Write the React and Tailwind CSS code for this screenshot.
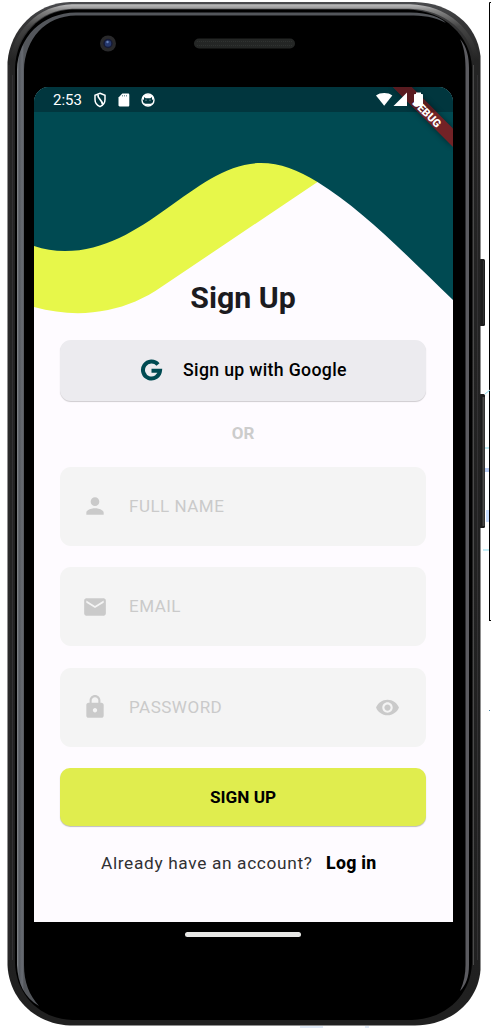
import React from "react";
import { MdPerson, MdEmail, MdLock, MdVisibility } from "react-icons/md";

function Shell() {
  return (
    <svg className="absolute inset-0" width="491" height="1028" viewBox="0 0 491 1028" fill="none">
      <defs>
        <linearGradient id="rim" x1="0" y1="2" x2="0" y2="1026" gradientUnits="userSpaceOnUse">
          <stop offset="0" stopColor="#4a4b4e" />
          <stop offset="0.02" stopColor="#363637" />
          <stop offset="0.06" stopColor="#242424" />
          <stop offset="1" stopColor="#202020" />
        </linearGradient>
        <linearGradient id="band" x1="0" y1="4" x2="0" y2="60" gradientUnits="userSpaceOnUse">
          <stop offset="0" stopColor="#c0c0c1" />
          <stop offset="0.12" stopColor="#858585" />
          <stop offset="0.4" stopColor="#454545" />
          <stop offset="1" stopColor="#242424" />
        </linearGradient>
        <linearGradient id="glareL" x1="17" y1="0" x2="24" y2="0" gradientUnits="userSpaceOnUse">
          <stop offset="0" stopColor="#85898d" />
          <stop offset="0.3" stopColor="#55595f" />
          <stop offset="0.75" stopColor="#686c73" />
          <stop offset="1" stopColor="#53565b" />
        </linearGradient>
      </defs>
      <path d="M489.5 620.500V2.500H491M489 620.500h2" stroke="#000" />
      <path d="M485 394l5-4M485 448h4M483 550h6" stroke="#8bdcee" />
      <path d="M485 469h4M485 471h4" stroke="#779ce8" />
      <path d="M486 510h3v12h-3z" fill="#c8ddff" />
      <path d="M489 710h1v1h-1z" fill="#4f8cab" />
      <path d="M300 1027h23M365 1027h4" stroke="#bfd4ee" />
      <rect x="479" y="259" width="6" height="67" rx="1.500" fill="#1b1b1b" />
      <path d="M483.500 261v63" stroke="#303030" />
      <rect x="479" y="394" width="6" height="134" rx="1.500" fill="#1b1b1b" />
      <path d="M483.500 397v129" stroke="#494847" strokeWidth="2" />
      <path d="M7.500 62C10 30 35 3 70 2H415C450 3 477 24 480.500 56V970C478 1002 451 1025 415 1025.500H70C35 1024 9 999 7.500 965Z" fill="url(#rim)" />
      <path d="M12 76V65C14 32 40 7.500 72 6.500H410C446 7.500 474 31 477 65V76" stroke="url(#band)" strokeWidth="4.500" />
      <path d="M15 68C16 36 40 10.500 72 9.500H408C444 10.500 471 36 472 68V963C471 995 446 1019 412 1020H72C40 1019 16 995 15 963Z" fill="#000" />
      <path d="M473.500 65V965" stroke="#4a4a4a" />
      <path d="M9 65V960M12.500 75V960M477.500 75V960" stroke="#323133" />
      <path d="M17 70C18 37 42 13 76 12.500H410C430 13 440 17 446 23C433 16.500 424 15.500 408 15.500H76C45 16 25 39 24 70V965C24 982 29 995 39 1006C24 997 18 984 17 965Z" fill="url(#glareL)" />
      <path d="M460 39C467 47 469 57 469 68V965C469 977 466 985 460 991C464 982 465.500 974 465.500 965V68C465.500 56 464 47 460 39Z" fill="#5b5b60" />
      <circle cx="108" cy="43.500" r="8" fill="#29292b" />
      <circle cx="108" cy="43.500" r="4.700" fill="#151a35" />
      <circle cx="108" cy="43.500" r="3.200" fill="#26386d" />
      <circle cx="107.500" cy="42" r="1.200" fill="#647eb6" />
      <rect x="194" y="38.500" width="101" height="10" rx="5" fill="#242625" />
      <path d="M197 41.500H292M197 45.500H292" stroke="#303331" strokeDasharray="1 1" />
    </svg>
  );
}

function Waves() {
  return (
    <svg className="absolute inset-0" width="419" height="240" viewBox="34 87 419 240">
      <path d="M34 220V307C60 314 84 315 108 310C127 306 144 299 162 286.500L317.500 182L300 140H34Z" fill="#e7f74a" />
      <path d="M34 87H453V300C405 254 363 210 317.500 182C298 170 280 163 261 163C196 163 146 251 65 251C54 251 44 249.500 34 246Z" fill="#004a52" />
    </svg>
  );
}

function StatusBar() {
  return (
    <div className="relative flex h-[25px] items-center bg-[#01363e] pl-[19px] text-white">
      <span className="w-[40px] pt-[2px] text-[15px] leading-[23px]">2:53</span>
      <svg className="h-[16px] w-[14px]" viewBox="0 0 14 16" fill="none" stroke="#fff" strokeWidth="1.500">
        <path d="M7 1.300 12 3.200V7.500C12 11 10 13.300 7 14.600 4 13.300 2 11 2 7.500V3.200Z" />
        <path d="M5 2.500C4 7 9.500 7.500 9.500 12.500" strokeWidth="1.700" />
      </svg>
      <svg className="ml-[11px] h-[16px] w-[12px]" viewBox="0 0 12 16">
        <path d="M4.300 1.500H10c.8 0 1.300.5 1.300 1.200v10.600c0 .8-.5 1.200-1.200 1.200H1.700c-.8 0-1.200-.5-1.200-1.200V5.500Z" fill="#fff" />
        <path d="M4.500 3v1.500M6.500 3v1.500M8.500 3v1.500" stroke="#01363e" strokeWidth=".5" />
      </svg>
      <svg className="ml-[11px] h-[14px] w-[14px]" viewBox="0 0 14 14">
        <circle cx="7" cy="7" r="6" fill="none" stroke="#fff" strokeWidth="1.400" />
        <path d="M1.500 6C1.500 0 12.500 0 12.500 6L11 7V4L9.300 5.200H4.700L3 4V7Z" fill="#fff" />
        <path d="M2.600 10 4.500 10.700H9.500L11.400 10L9.500 12.500H4.500Z" fill="#fff" />
        <path d="M4.500 7.200h1M8.500 7.200h1" stroke="#fff" strokeWidth=".7" />
      </svg>
    </div>
  );
}

function DebugRibbon() {
  return (
    <svg className="absolute top-0 right-0" width="100" height="72" viewBox="353 87 100 72">
      <defs>
        <filter id="shade" x="-30%" y="-30%" width="160%" height="160%">
          <feGaussianBlur stdDeviation="3" />
        </filter>
      </defs>
      <path d="M393 87H411L453 129V147Z" fill="#000" opacity=".45" filter="url(#shade)" />
      <path d="M393 87H411.500L453 128.500V147Z" fill="#732226" />
      <path d="M393 87H411.500L436.500 112H418Z" fill="#591b20" />
      <text x="427" y="117" textAnchor="middle" transform="rotate(45 427 113)" fill="#fff" fontFamily="Roboto, sans-serif" fontSize="11" fontWeight="900">DEBUG</text>
      <path d="M376 95.500C380 92.200 388.500 92.200 392.300 95.500L384.200 105.700Z" fill="#fff" />
      <path d="M407 92.500V106H393.500Z" fill="#fff" />
      <path d="M416 92.500h5V94h1.200q.8 0 .8.800V105q0 1-1 1h-7q-1 0-1-1V94.800q0-.8.800-.8H416Z" fill="#fff" />
    </svg>
  );
}

function Field({ Icon, label, trailing }) {
  return (
    <div className="flex h-[79px] items-center rounded-[11px] bg-[#f4f4f4] pl-[21.500px] pr-[26px] text-[#cacaca]">
      <Icon size={26} />
      <span className="ml-[21.500px] flex-1 pt-[1px] text-[17px] tracking-[0.500px]">{label}</span>
      {trailing}
    </div>
  );
}

export default function App() {
  return (
    <div className="relative h-[1028px] w-[491px] overflow-hidden bg-white pt-[87px] pl-[34px] font-['Roboto',sans-serif]">
      <Shell />
      <main className="relative h-[835px] w-[419px] overflow-hidden rounded-t-[15px] bg-[#fefbff]">
        <Waves />
        <StatusBar />
        <DebugRibbon />
        <div className="relative flex flex-col pr-[27px] pl-[26px] pt-[166px]">
          <h1 className="h-[61.500px] text-center text-[30.300px] leading-[40px] font-bold text-[#1c1b1f]">Sign Up</h1>
          <button className="flex h-[61px] w-full items-center rounded-[11px] bg-[#ecebef] pl-[80px] text-[17.700px] font-medium text-black shadow-[0_1px_1px_#00000030]">
            <svg className="mr-[20px] h-[23px] w-[23px]" viewBox="0 0 24 24">
              <path d="M18.800 5.700A8.900 8.900 0 1 0 20.900 12.200H12" fill="none" stroke="#004a52" strokeWidth="4.200" />
            </svg>
            <span className="pt-[1px] tracking-[0.330px]">Sign up with Google</span>
          </button>
          <div className="flex h-[66px] items-center justify-center pt-[1px] text-[17px] font-bold text-[#cccccc]">OR</div>
          <div className="flex flex-col gap-[21.500px]">
            <Field Icon={MdPerson} label="FULL NAME" />
            <Field Icon={MdEmail} label="EMAIL" />
            <Field Icon={MdLock} label="PASSWORD" trailing={<MdVisibility size={25} />} />
          </div>
          <button className="mt-[21.500px] h-[58px] w-full rounded-[10px] bg-[#e0ed4e] pt-[1px] text-[17.200px] font-bold text-black shadow-[0_1px_1px_#00000040]">SIGN UP</button>
          <p className="mt-[25.500px] flex items-center pl-[41px] text-[17.300px] leading-[22px] text-[#303033]">
            <span className="w-[225px] tracking-[0.650px] whitespace-nowrap">Already have an account?</span>
            <a className="text-[17.700px] font-extrabold tracking-[0.300px] whitespace-nowrap text-black">Log in</a>
          </p>
        </div>
      </main>
      <div className="relative mt-[10px] ml-[151px] h-[5px] w-[116px] rounded-full bg-[#e8e8e6]" />
    </div>
  );
}
